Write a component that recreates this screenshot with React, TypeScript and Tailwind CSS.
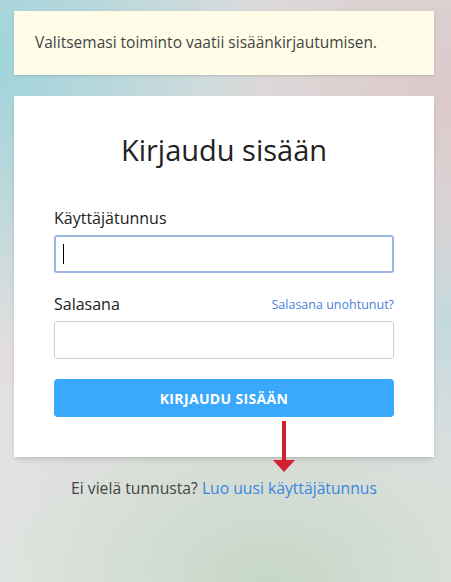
import React from "react";

export default function App() {
  return (
    <div
      className="relative min-h-[582px] w-full overflow-hidden pl-[14px] pr-[17px] pt-[11px] text-[#333] bg-[radial-gradient(ellipse_60%_50%_at_0%_10%,#9fd4db_0%,rgba(159,212,219,0)_100%),radial-gradient(ellipse_55%_40%_at_100%_15%,#dcc9ca_0%,rgba(220,201,202,0)_100%),radial-gradient(ellipse_45%_30%_at_100%_55%,#c3d9de_0%,rgba(195,217,222,0)_100%),radial-gradient(ellipse_70%_35%_at_60%_100%,#c6d7c8_0%,rgba(198,215,200,0)_100%),linear-gradient(180deg,#dcdcdc_0%,#e2dede_60%,#e4e6e4_100%)]"
      style={{ fontFamily: '"Open Sans", "Liberation Sans", sans-serif' }}
    >
      {/* Notice */}
      <div className="flex h-[64px] items-center bg-[#fffde8] px-[21px] text-[15.5px] text-[#444] shadow-sm">
        Valitsemasi toiminto vaatii sisäänkirjautumisen.
      </div>

      {/* Login card */}
      <div className="mt-[21px] h-[361px] bg-white px-[40px] pt-[34px] shadow-md">
        <h1 className="text-center text-[29px] leading-[40px] text-[#222]">Kirjaudu sisään</h1>

        <label className="mt-[38px] block text-[16px] font-medium leading-[20px] text-[#222]">Käyttäjätunnus</label>
        <div className="mt-[7px] flex h-[38px] items-center rounded-[3px] border-2 border-[#9cb6e2] px-[7px]">
          <span className="h-[20px] w-px bg-black" />
        </div>

        <div className="mt-[21px] flex items-end justify-between">
          <span className="text-[16px] font-medium leading-[20px] text-[#222]">Salasana</span>
          <a className="text-[12.5px] leading-[18px] text-[#4a80dc]">Salasana unohtunut?</a>
        </div>
        <div className="mt-[7px] h-[38px] rounded-[3px] border border-[#cfcfcf]" />

        <button className="mt-[20px] flex h-[38px] w-full items-center justify-center rounded-[4px] bg-[#3aa8fc] text-[14px] font-bold tracking-wide text-white">
          KIRJAUDU SISÄÄN
        </button>
      </div>

      {/* Red arrow */}
      <svg className="absolute left-[273px] top-[421px]" width="22" height="51" viewBox="0 0 22 51">
        <rect x="9" y="0" width="4" height="40" fill="#d21f2e" />
        <polygon points="0,39 22,39 11,51" fill="#d21f2e" />
      </svg>

      <p className="mt-[20px] text-center text-[15.7px] text-[#444]">
        Ei vielä tunnusta? <a className="text-[#3a86e0]">Luo uusi käyttäjätunnus</a>
      </p>
    </div>
  );
}
